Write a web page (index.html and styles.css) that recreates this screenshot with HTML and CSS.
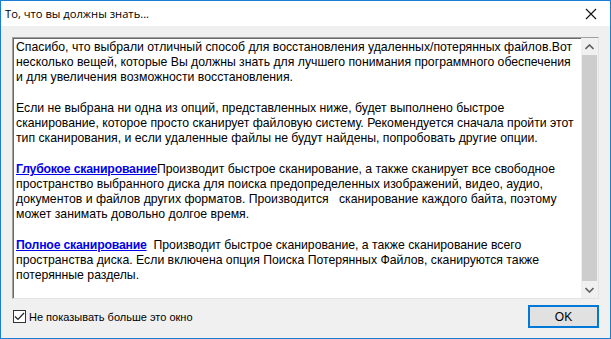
FILE: index.html
```html
<!DOCTYPE html>
<html lang="ru">
<head>
  <meta charset="UTF-8">
  <title>То, что вы должны знать...</title>
  <link rel="stylesheet" href="styles.css">
</head>
<body>
  <div class="window">
    <div class="titlebar">
      <span class="title">То, что вы должны знать...</span>
      <span class="close">
        <svg width="12" height="12" viewBox="0 0 12 12"><path d="M1 1 L11 11 M11 1 L1 11" stroke="#111" stroke-width="1.1" fill="none"/></svg>
      </span>
    </div>

    <div class="client">
      <!-- Info text box (lines broken as in the rich edit control) -->
      <div class="textbox">
        <div class="content">
          <p>Спасибо, что выбрали отличный способ для восстановления удаленных/потерянных файлов.Вот<br>
          несколько вещей, которые Вы должны знать для лучшего понимания программного обеспечения<br>
          и для увеличения возможности восстановления.</p>
          <p>Если не выбрана ни одна из опций, представленных ниже, будет выполнено быстрое<br>
          сканирование, которое просто сканирует файловую систему. Рекомендуется сначала пройти этот<br>
          тип сканирования, и если удаленные файлы не будут найдены, попробовать другие опции.</p>
          <p><a href="#">Глубокое сканирование</a>Производит быстрое сканирование, а также сканирует все свободное<br>
          пространство выбранного диска для поиска предопределенных изображений, видео, аудио,<br>
          документов и файлов других форматов. Производится &nbsp; сканирование каждого байта, поэтому<br>
          может занимать довольно долгое время.</p>
          <p><a href="#">Полное сканирование</a>&nbsp; Производит быстрое сканирование, а также сканирование всего<br>
          пространства диска. Если включена опция Поиска Потерянных Файлов, сканируются также<br>
          потерянные разделы.</p>
        </div>
        <div class="scrollbar">
          <span class="arrow">
            <svg width="9" height="6" viewBox="0 0 9 6"><path d="M0.5 5 L4.5 1 L8.5 5" stroke="#606060" stroke-width="1.6" fill="none"/></svg>
          </span>
          <span class="thumb"></span>
          <span class="arrow">
            <svg width="9" height="6" viewBox="0 0 9 6"><path d="M0.5 1 L4.5 5 L8.5 1" stroke="#606060" stroke-width="1.6" fill="none"/></svg>
          </span>
        </div>
      </div>

      <div class="footer">
        <label class="check">
          <span class="box">
            <svg width="11" height="9" viewBox="0 0 11 9"><path d="M1 4.5 L4 7.5 L10 1" stroke="#222" stroke-width="1.2" fill="none"/></svg>
          </span>
          Не показывать больше это окно
        </label>
        <button class="ok">OK</button>
      </div>
    </div>
  </div>
</body>
</html>
```

FILE: styles.css
```css
* {
  box-sizing: border-box;
}

body {
  margin: 0;
  width: 611px;
  height: 339px;
  overflow: hidden;
  font-family: "Liberation Sans", Arial, sans-serif;
  color: #000;
}

.window {
  width: 611px;
  height: 339px;
  border: 1px solid #1a7ed4;
  display: flex;
  flex-direction: column;
  background: #f0f0f0;
}

/* Title bar */
.titlebar {
  height: 25px;
  background: #fff;
  display: flex;
  align-items: center;
  justify-content: space-between;
  padding: 0 13px 0 4px;
}

.title {
  font-family: "Open Sans", "Noto Sans", sans-serif;
  font-size: 11.2px;
  color: #000;
}

.close {
  display: flex;
}

/* Client area */
.client {
  flex: 1;
  display: flex;
  flex-direction: column;
  padding: 11px 11px 10px 11px;
}

.textbox {
  height: 262px;
  display: flex;
  background: #fff;
  border-top: 1px solid #a0a0a0;
  border-left: 1px solid #a0a0a0;
  border-right: 1px solid #e3e3e3;
  border-bottom: 1px solid #e3e3e3;
  box-shadow: inset 1px 1px 0 #696969;
}

.content {
  flex: 1;
  min-width: 0;
  padding: 2px 0 0 3px;
  font-size: 12.25px;
  line-height: 15px;
  white-space: nowrap;
  overflow: hidden;
}

.content p {
  margin: 0 0 16px 0;
}

.content a {
  color: #0000ee;
  font-weight: bold;
  letter-spacing: -0.2px;
  text-decoration: underline;
}

.scrollbar {
  width: 17px;
  display: flex;
  flex-direction: column;
  background: #f0f0f0;
}

.arrow {
  height: 17px;
  display: flex;
  align-items: center;
  justify-content: center;
}

.thumb {
  flex: 1;
  margin: 0 1px;
  background: #cdcdcd;
}

/* Footer */
.footer {
  flex: 1;
  display: flex;
  align-items: center;
  justify-content: space-between;
  padding-top: 6px;
}

.check {
  display: flex;
  align-items: center;
  gap: 3px;
  font-size: 11px;
  padding-left: 1px;
}

.box {
  width: 13px;
  height: 13px;
  border: 1px solid #333;
  background: #fff;
  display: flex;
  align-items: center;
  justify-content: center;
}

.ok {
  width: 71px;
  height: 23px;
  border: 2px solid #0078d7;
  background: #e1e1e1;
  font-family: "Liberation Sans", Arial, sans-serif;
  font-size: 12px;
  color: #000;
  padding: 0;
}
```
